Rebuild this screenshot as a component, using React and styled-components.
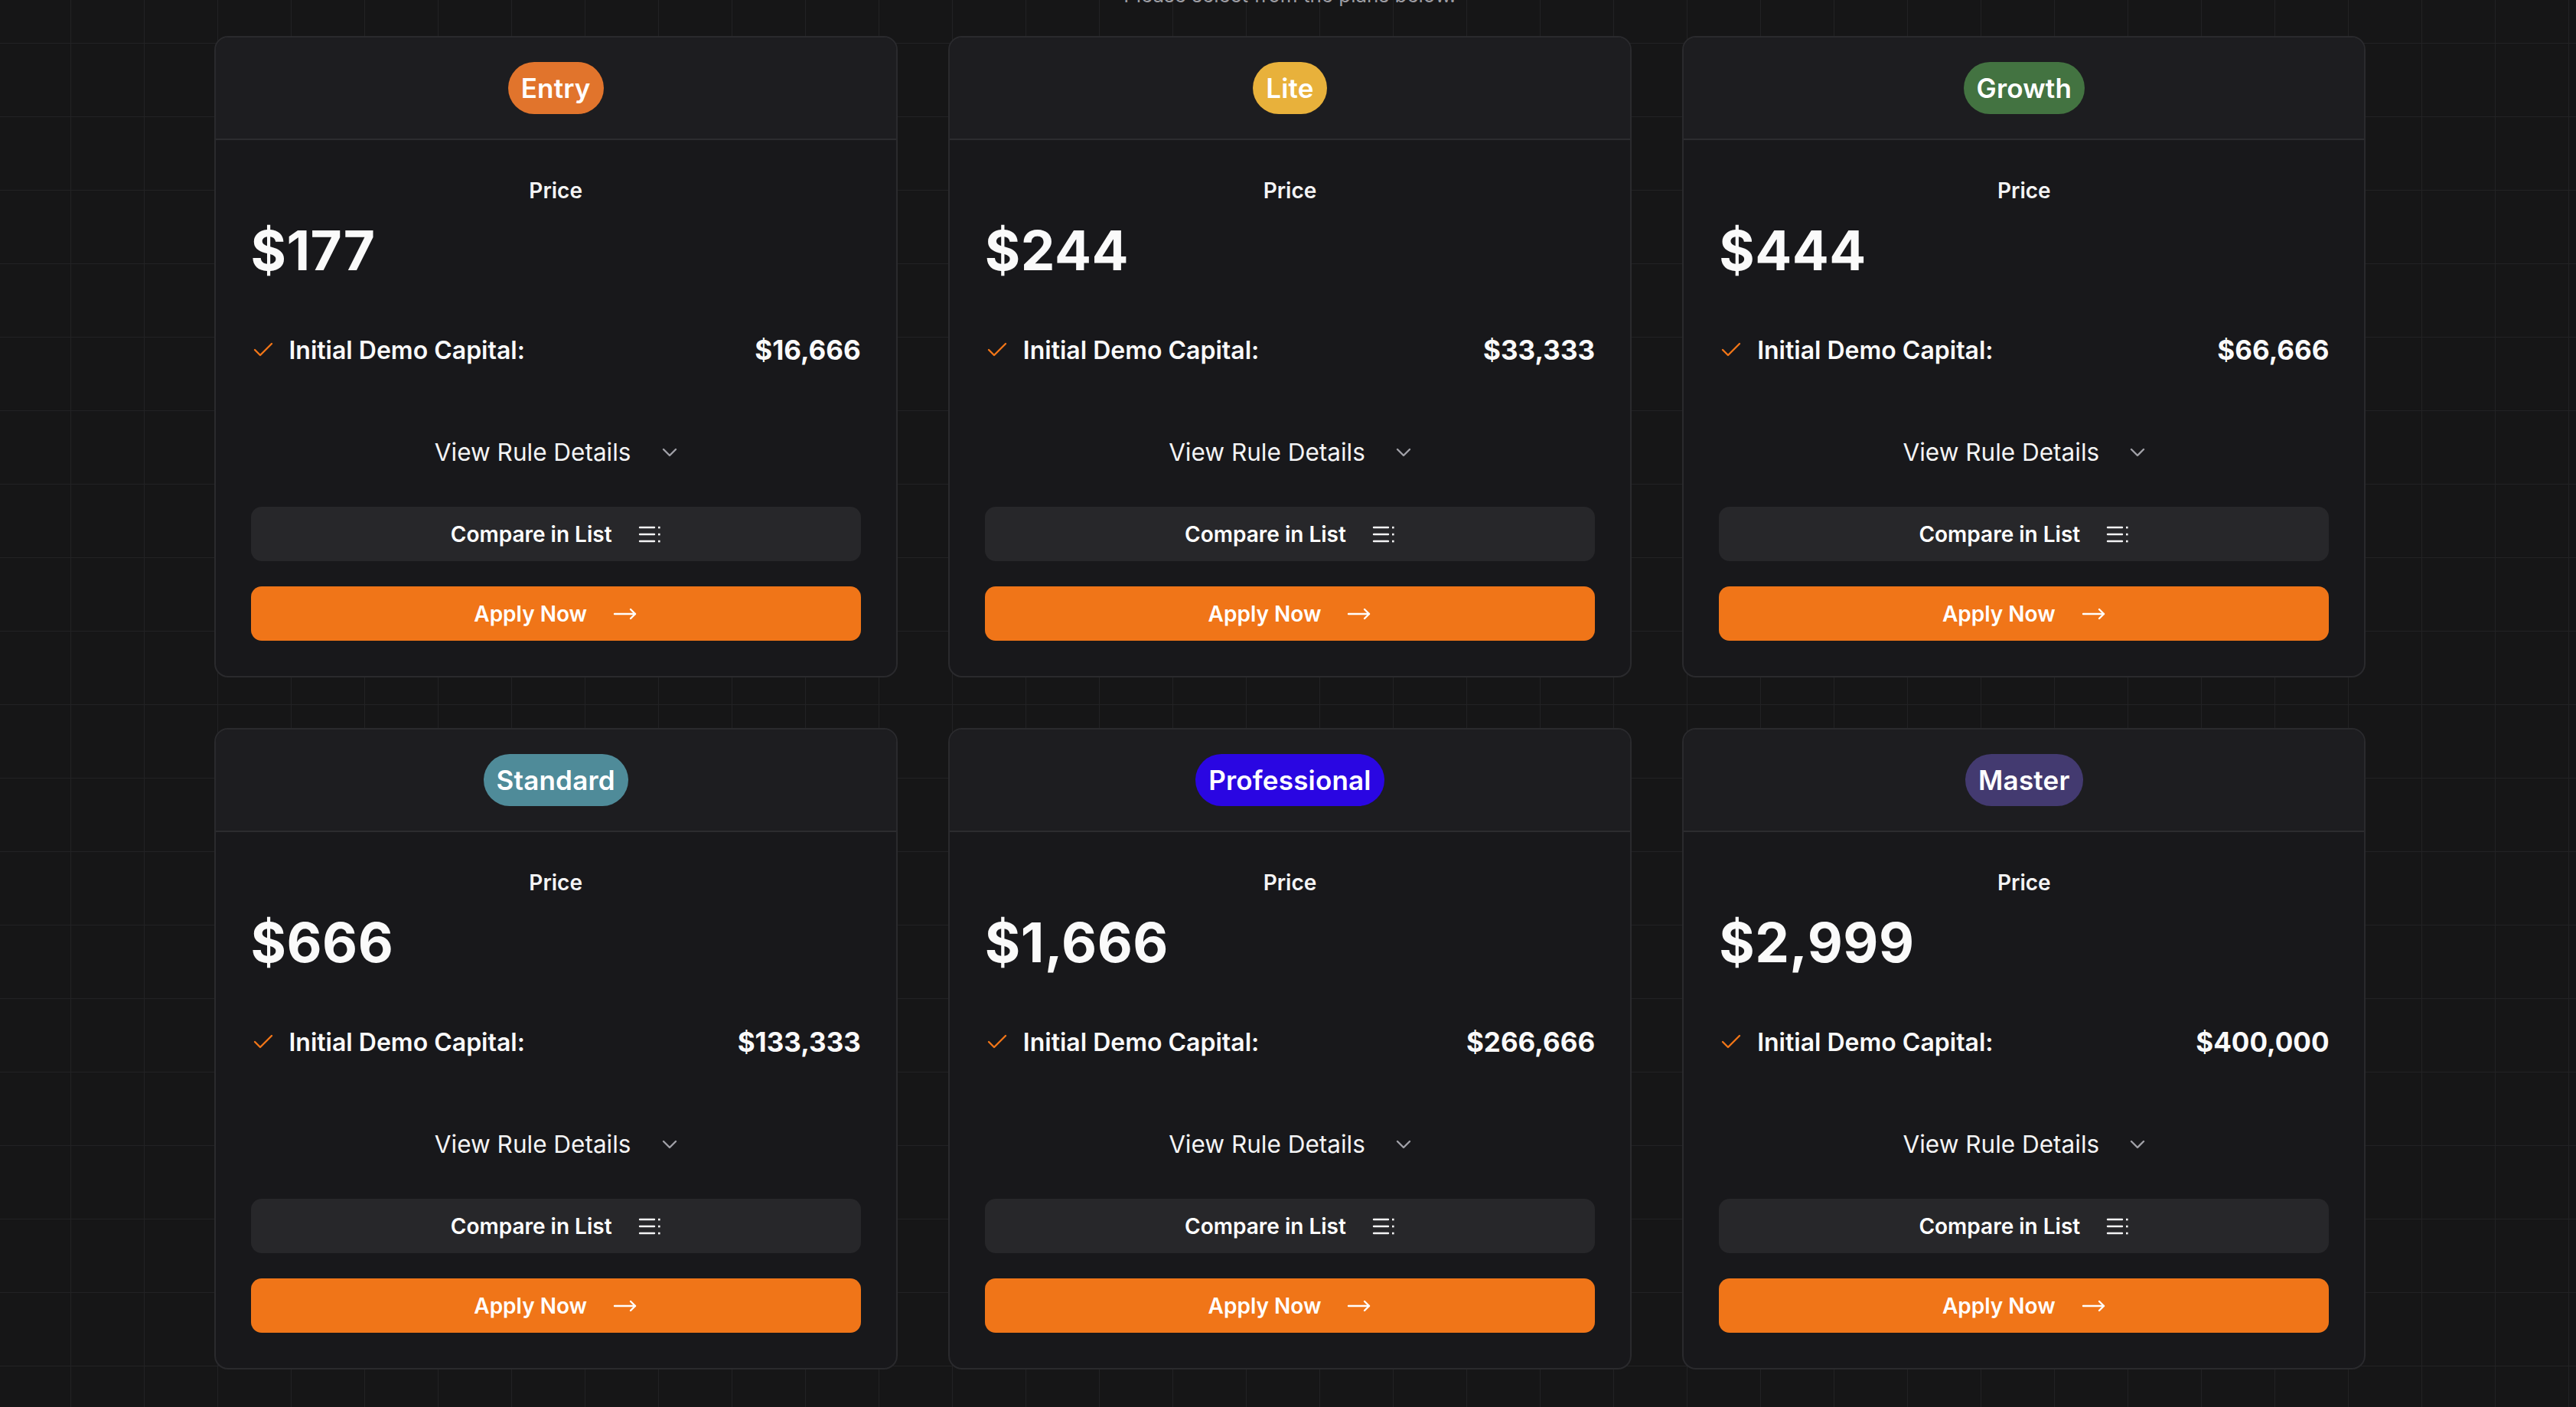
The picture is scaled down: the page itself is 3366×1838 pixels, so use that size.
import React from "react";
import styled, { createGlobalStyle } from "styled-components";

const GlobalStyle = createGlobalStyle`
  html, body {
    margin: 0;
    padding: 0;
  }
  body {
    background-color: #161617;
    background-image:
      linear-gradient(to right, #222224 1.5px, transparent 1.5px),
      linear-gradient(to bottom, #222224 1.5px, transparent 1.5px);
    background-size: 96px 96px;
    background-position: 92px 56px;
    font-family: Inter, "Noto Sans", "Liberation Sans", sans-serif;
    color: #fafafa;
    min-height: 1838px;
    overflow: hidden;
  }
`;

const Page = styled.main`
  display: flex;
  flex-direction: column;
  align-items: center;
  width: 100%;
`;

const Subtitle = styled.p`
  margin: -26px 0 0 4px;
  height: 40px;
  line-height: 40px;
  font-size: 26px;
  color: #9d9da3;
  text-align: center;
`;

const Grid = styled.section`
  margin: 33px 0 0 5px;
  width: 2812px;
  display: grid;
  grid-template-columns: repeat(3, 1fr);
  column-gap: 66px;
  row-gap: 66px;
`;

const Card = styled.article`
  display: flex;
  flex-direction: column;
  border: 2px solid #2a2a2d;
  border-radius: 18px;
  overflow: hidden;
  background: #18181b;
`;

const CardHeader = styled.header`
  height: 132px;
  display: flex;
  align-items: center;
  justify-content: center;
  background: #1d1d20;
  border-bottom: 2px solid #2c2c2f;
`;

const Badge = styled.span`
  height: 68px;
  display: inline-flex;
  align-items: center;
  padding: 0 17px;
  border-radius: 999px;
  background: ${(p) => p.$color};
  color: #ffffff;
  font-size: 35px;
  font-weight: 600;
  letter-spacing: 0.2px;
`;

const CardBody = styled.div`
  display: flex;
  flex-direction: column;
  padding: 46px 46px 46px;
`;

const PriceLabel = styled.div`
  text-align: center;
  font-size: 28px;
  font-weight: 600;
  line-height: 40px;
  color: #f4f4f5;
`;

const PriceValue = styled.div`
  margin-top: 18px;
  font-size: 71px;
  font-weight: 700;
  line-height: 80px;
  color: #fafafa;
  letter-spacing: 0.5px;
`;

const FeatureRow = styled.div`
  margin-top: 66px;
  height: 48px;
  display: flex;
  align-items: center;
  justify-content: space-between;
  font-size: 32px;
  font-weight: 600;
`;

const FeatureLabel = styled.span`
  display: inline-flex;
  align-items: center;
  gap: 21px;
  padding-left: 3px;
`;

const FeatureValue = styled.span`
  font-size: 35px;
  font-weight: 700;
`;

const DetailsToggle = styled.button`
  margin-top: 85px;
  height: 48px;
  display: flex;
  align-items: center;
  justify-content: center;
  gap: 40px;
  background: transparent;
  border: none;
  color: #f4f4f5;
  font-family: inherit;
  font-size: 31.5px;
  font-weight: 400;
  padding: 0;
  cursor: pointer;
`;

const ActionButton = styled.button`
  margin-top: ${(p) => p.$gap}px;
  height: 71px;
  display: flex;
  align-items: center;
  justify-content: center;
  gap: 34px;
  border: none;
  border-radius: 14px;
  background: ${(p) => (p.$primary ? "#f07518" : "#27272a")};
  color: #ffffff;
  font-family: inherit;
  font-size: 28px;
  font-weight: 600;
  cursor: pointer;
`;

const CheckIcon = () => (
  <svg width="26" height="20" viewBox="0 0 26 20" fill="none">
    <polyline
      points="2,10 9,17 24,2"
      stroke="#f07518"
      strokeWidth="2.4"
      strokeLinecap="round"
      strokeLinejoin="round"
    />
  </svg>
);

const ChevronIcon = () => (
  <svg width="20" height="14" viewBox="0 0 20 14" fill="none">
    <polyline
      points="2,4 10,12 18,4"
      stroke="#a1a1a7"
      strokeWidth="2.4"
      strokeLinecap="round"
      strokeLinejoin="round"
    />
  </svg>
);

const ListIcon = () => (
  <svg width="30" height="26" viewBox="0 0 30 26" fill="none">
    <g stroke="#f4f4f5" strokeWidth="2.4" strokeLinecap="round">
      <line x1="2" y1="4" x2="21" y2="4" />
      <line x1="2" y1="13" x2="21" y2="13" />
      <line x1="2" y1="22" x2="21" y2="22" />
    </g>
    <g fill="#f4f4f5">
      <rect x="26" y="2.8" width="2.6" height="2.6" />
      <rect x="26" y="11.8" width="2.6" height="2.6" />
      <rect x="26" y="20.8" width="2.6" height="2.6" />
    </g>
  </svg>
);

const ArrowIcon = () => (
  <svg width="32" height="16" viewBox="0 0 32 16" fill="none">
    <g stroke="#ffffff" strokeWidth="2.4" strokeLinecap="round" strokeLinejoin="round">
      <line x1="2" y1="8" x2="29" y2="8" />
      <polyline points="23,2 29,8 23,14" />
    </g>
  </svg>
);

const plans = [
  { name: "Entry", color: "#e1742c", price: "$177", capital: "$16,666" },
  { name: "Lite", color: "#e8b13b", price: "$244", capital: "$33,333" },
  { name: "Growth", color: "#437341", price: "$444", capital: "$66,666" },
  { name: "Standard", color: "#4f8b99", price: "$666", capital: "$133,333" },
  { name: "Professional", color: "#2a06e2", price: "$1,666", capital: "$266,666" },
  { name: "Master", color: "#433a70", price: "$2,999", capital: "$400,000" },
];

const PlanCard = ({ plan }) => (
  <Card>
    <CardHeader>
      <Badge $color={plan.color}>{plan.name}</Badge>
    </CardHeader>
    <CardBody>
      <PriceLabel>Price</PriceLabel>
      <PriceValue>{plan.price}</PriceValue>
      <FeatureRow>
        <FeatureLabel>
          <CheckIcon />
          Initial Demo Capital:
        </FeatureLabel>
        <FeatureValue>{plan.capital}</FeatureValue>
      </FeatureRow>
      <DetailsToggle>
        View Rule Details
        <ChevronIcon />
      </DetailsToggle>
      <ActionButton $gap={48}>
        Compare in List
        <ListIcon />
      </ActionButton>
      <ActionButton $gap={33} $primary>
        Apply Now
        <ArrowIcon />
      </ActionButton>
    </CardBody>
  </Card>
);

export default function App() {
  return (
    <Page>
      <GlobalStyle />
      <Subtitle>Please select from the plans below.</Subtitle>
      <Grid>
        {plans.map((p) => (
          <PlanCard key={p.name} plan={p} />
        ))}
      </Grid>
    </Page>
  );
}
